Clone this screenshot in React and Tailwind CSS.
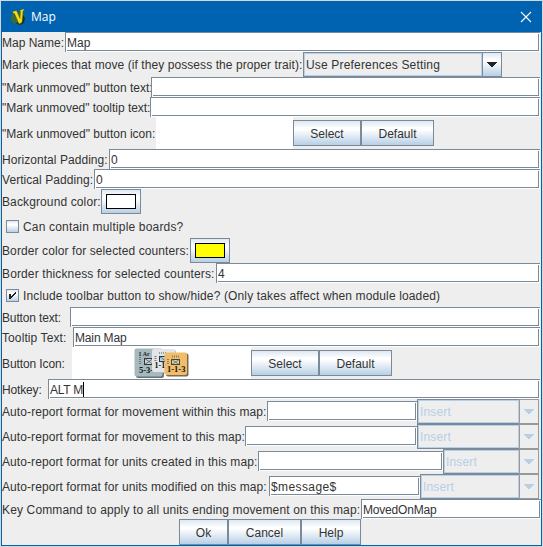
import React from "react";

function Label({ w, children, className = "pt-0.5" }) {
  return (
    <div className={`shrink-0 whitespace-pre ${className}`} style={{ width: w }}>
      {children}
    </div>
  );
}

function Field({ w, children, caret, className = "" }) {
  return (
    <div
      className={`flex h-5 shrink-0 border-t border-l border-[#7a8a99] bg-white pr-px pb-px ${w} ${className}`}
    >
      <div className="mt-px ml-px flex flex-1 items-center border-r border-b border-[#7a8a99] whitespace-pre">
        <span className="-ml-px pt-0.5 pl-px">{children}</span>
        {caret && <span className="h-[15px] w-px bg-black" />}
      </div>
    </div>
  );
}

function Button({ w, children }) {
  return (
    <div
      className={`flex h-[26px] shrink-0 items-center justify-center border border-[#7a8a99] bg-[linear-gradient(to_bottom,#dde8f3_0%,#ffffff_30%,#ffffff_36%,#b8cfe5_100%)] pt-0.5 ${w}`}
    >
      {children}
    </div>
  );
}

function ColorButton({ color }) {
  return (
    <div className="flex h-[25px] w-10 shrink-0 items-center justify-center border border-[#7a8a99] bg-[linear-gradient(to_bottom,#dde8f3_0%,#ffffff_30%,#ffffff_36%,#b8cfe5_100%)]">
      <div className={`h-[15px] w-[30px] border border-black ${color}`} />
    </div>
  );
}

function Arrow({ className = "" }) {
  return (
    <svg width="10" height="5" viewBox="0 0 10 5" className={className} shapeRendering="crispEdges">
      <path d="M0 0h10v1h-1v1h-1v1h-1v1h-1v1h-2v-1h-1v-1h-1v-1h-1v-1h-1z" fill="currentColor" />
    </svg>
  );
}

function Combo() {
  return (
    <div className="flex h-[25px] w-[199px] border border-[#7a8a99]">
      <div className="flex flex-1 items-center border border-[#b8cfe5] pt-px pl-px tracking-[0.17px] whitespace-pre">
        Use Preferences Setting
      </div>
      <div className="flex w-[19px] items-center justify-center border-l border-[#7a8a99] bg-[linear-gradient(to_bottom,#dde8f3_0%,#ffffff_30%,#ffffff_36%,#b8cfe5_100%)]">
        <Arrow className="text-[#222]" />
      </div>
    </div>
  );
}

function InsertCombo({ w }) {
  return (
    <div className={`flex h-[25px] shrink-0 text-[#b8cfe5] ${w}`}>
      <div className="flex flex-1 border border-r-0 border-[#7a8a99]">
        <div className="flex flex-1 items-center border border-[#b8cfe5] pt-px pl-px tracking-[0.15px]">Insert</div>
      </div>
      <div className="flex w-5 items-center justify-center border border-[#999]">
        <Arrow />
      </div>
    </div>
  );
}

function Checkbox({ checked, children, className }) {
  return (
    <div className="flex h-6 items-center pl-1">
      <div className="mt-px mr-1 flex h-[13px] w-[13px] border border-[#7a8a99] bg-[linear-gradient(to_bottom,#dde8f3_0%,#ffffff_30%,#ffffff_36%,#b8cfe5_100%)]">
        {checked && (
          <svg width="11" height="11" viewBox="0 0 11 11" shapeRendering="crispEdges">
            <path
              d="M2 4h2v2h1v-1h1v-1h1v-1h1v-1h1v2h-1v1h-1v1h-1v1h-1v1h-1v1h-2z"
              fill="#222"
            />
          </svg>
        )}
      </div>
      <div className={`pt-0.5 whitespace-pre ${className}`}>{children}</div>
    </div>
  );
}

function Row({ h = "h-5", children }) {
  return <div className={`flex shrink-0 items-center ${h}`}>{children}</div>;
}

function FormatRow({ labelWidth, label, tracking, fieldWidth, value, comboWidth }) {
  return (
    <Row h="h-[25px]">
      <Label w={labelWidth} className={`pt-px ${tracking}`}>{label}</Label>
      <Field w={fieldWidth} className="mt-0.5 self-start tracking-[0.4px]">{value}</Field>
      <InsertCombo w={comboWidth} />
    </Row>
  );
}

function Counters() {
  return (
    <svg width="56" height="30" viewBox="0 0 56 30" fontFamily="Liberation Serif, serif" fontWeight="bold">
      <rect x="2" y="2" width="28" height="28" rx="2" fill="#667479" />
      <rect x="0.5" y="0.5" width="28" height="28" rx="2" fill="#a5b9bf" />
      <text x="4.500" y="8" fontSize="6" fill="#222">1 Ar</text>
      <rect x="10.500" y="10.500" width="9" height="6" fill="#c6d3d7" stroke="#333" />
      <path d="M10 10l10 7M20 10l-10 7" stroke="#444" strokeWidth=".7" />
      <path d="M6 9v7" stroke="#6b7a80" strokeWidth="2" strokeDasharray="1 1" />
      <text x="5" y="25" fontSize="8.500" fill="#111">5-3-</text>
      <rect x="19" y="2" width="23" height="23" rx="2" fill="#b8b8bc" />
      <rect x="18" y="1" width="23" height="23" rx="2" fill="#e4e5e9" />
      <path d="M25 5h7" stroke="#999" strokeWidth="2" strokeDasharray="1 1" />
      <path d="M21.500 8v6" stroke="#777" strokeWidth="2" strokeDasharray="1 1" />
      <rect x="25.500" y="8.500" width="8" height="5" fill="#a9d6ef" stroke="#333" />
      <path d="M25 8l8 6" stroke="#444" strokeWidth=".7" />
      <text x="20.500" y="20" fontSize="8" fill="#111">1-1</text>
      <rect x="32" y="5.500" width="22.500" height="23" rx="2" fill="#7b6c51" />
      <rect x="30.500" y="4.500" width="22.500" height="22.500" rx="2" fill="#f0be6b" />
      <path d="M38 8.500h7" stroke="#987a48" strokeWidth="2" strokeDasharray="1 1" />
      <path d="M34 11v6" stroke="#987a48" strokeWidth="2" strokeDasharray="1 1" />
      <rect x="37.500" y="11.500" width="8" height="5" fill="#d9dca5" stroke="#444" />
      <path d="M37 11l9 6M46 11l-9 6" stroke="#555" strokeWidth=".7" />
      <text x="33" y="24" fontSize="8.500" fill="#111">1-1-3</text>
    </svg>
  );
}

export default function App() {
  return (
    <div className="h-[547px] w-[543px] overflow-hidden bg-[#d5d8d9] px-px pt-px pb-px font-['Liberation_Sans',Arial,sans-serif] text-[12px] leading-[14px] text-[#333]">
      <div className="flex h-[545px] w-[541px] flex-col border-x border-b border-[#0063b1] bg-[#eeeeee]">
        <div className="flex h-[31px] shrink-0 items-center bg-[#0063b1] pr-[9px] pl-2 text-white">
          <svg width="16" height="16" viewBox="0 0 16 16">
            <path d="M1 8l2-4 4-1h5l2 2 1 5-2 4-4 1.500-5-1-3-3z" fill="#3c6b3a" />
            <path d="M5 14l5 2 4-2 1-5-2-3-1 7z" fill="#15342f" />
            <path d="M2.500 2.500l4-1 3.500 8 .5-7-1-1L13.500 0l1 1-1.500 1-1 11.500-3 1.500-4.500-10.500-1 .5z" fill="#f8e010" stroke="#3e4613" strokeWidth=".4" />
          </svg>
          <span className="ml-1 flex-1 pl-px font-['Open_Sans','Noto_Sans',sans-serif]">Map</span>
          <svg width="12" height="12" viewBox="0 0 12 12" stroke="white" strokeWidth="1.1">
            <path d="M1 1l10 10M11 1l-10 10" />
          </svg>
        </div>

        <Row><Label w={63}>Map Name:</Label><Field w="w-[475px]">Map</Field></Row>
        <Row h="h-[25px]"><Label w={301} className="pt-px tracking-[0.075px]">Mark pieces that move (if they possess the proper trait):</Label><Combo /></Row>
        <Row><Label w={149}>"Mark unmoved" button text:</Label><Field w="w-[389px]" /></Row>
        <Row><Label w={148} className="pt-0.5 tracking-[-0.03px]">"Mark unmoved" tooltip text:</Label><Field w="w-[390px]" /></Row>
        <Row h="h-8">
          <Label w={154}>"Mark unmoved" button icon:</Label>
          <div className="h-8 w-[137px] bg-white" />
          <Button w="w-[68px]">Select</Button>
          <Button w="w-[73px]">Default</Button>
        </Row>
        <Row><Label w={107} className="pt-0.5 tracking-[0.05px]">Horizontal Padding:</Label><Field w="w-[431px]">0</Field></Row>
        <Row><Label w={92} className="pt-0.5 tracking-[0.06px]">Vertical Padding:</Label><Field w="w-[446px]">0</Field></Row>
        <Row h="h-[25px]"><Label w={99} className="pt-px tracking-[0.12px]">Background color:</Label><ColorButton color="bg-white" /></Row>
        <Checkbox className="tracking-[0.18px]">Can contain multiple boards?</Checkbox>
        <Row h="h-[25px]"><Label w={188} className="pt-px tracking-[0.1px]">Border color for selected counters:</Label><ColorButton color="bg-[#ffff00]" /></Row>
        <Row><Label w={214} className="pt-0.5 tracking-[0.13px]">Border thickness for selected counters:</Label><Field w="w-[324px]">4</Field></Row>
        <Checkbox checked className="tracking-[0.13px]">Include toolbar button to show/hide? (Only takes affect when module loaded)</Checkbox>
        <Row><Label w={68} className="pt-0.5 tracking-[-0.15px]">Button text:</Label><Field w="w-[470px]" /></Row>
        <Row><Label w={71} className="pt-0.5 tracking-[0.1px]">Tooltip Text:</Label><Field w="w-[467px]" className="tracking-[-0.15px]">Main Map</Field></Row>
        <Row h="h-8">
          <Label w={70} className="pt-0.5 tracking-[-0.1px]">Button Icon:</Label>
          <div className="flex h-8 w-[179px] items-center justify-center bg-white"><Counters /></div>
          <Button w="w-[68px]">Select</Button>
          <Button w="w-[73px]">Default</Button>
        </Row>
        <Row><Label w={46} className="pt-0.5 tracking-[-0.15px]">Hotkey:</Label><Field w="w-[492px]" className="tracking-[-0.25px]" caret>ALT M</Field></Row>
        <FormatRow labelWidth={265} tracking="tracking-[0.09px]" label="Auto-report format for movement within this map:" fieldWidth="w-[150px]" comboWidth="w-[122px]" />
        <FormatRow labelWidth={243} tracking="tracking-[0.08px]" label="Auto-report format for movement to this map:" fieldWidth="w-[172px]" comboWidth="w-[122px]" />
        <FormatRow labelWidth={256} tracking="tracking-[0.08px]" label="Auto-report format for units created in this map:" fieldWidth="w-[185px]" comboWidth="w-[96px]" />
        <FormatRow labelWidth={267} tracking="tracking-[0.08px]" label="Auto-report format for units modified on this map:" fieldWidth="w-[151px]" comboWidth="w-[119px]" value="$message$" />
        <Row><Label w={359} className="pt-0.5 tracking-[0.14px]">Key Command to apply to all units ending movement on this map:</Label><Field w="w-[180px]" className="tracking-[-0.2px]">MovedOnMap</Field></Row>
        <div className="flex shrink-0 pl-[177px]">
          <Button w="w-[49px]">Ok</Button>
          <Button w="w-[73px]">Cancel</Button>
          <Button w="w-[60px]">Help</Button>
        </div>
      </div>
    </div>
  );
}
